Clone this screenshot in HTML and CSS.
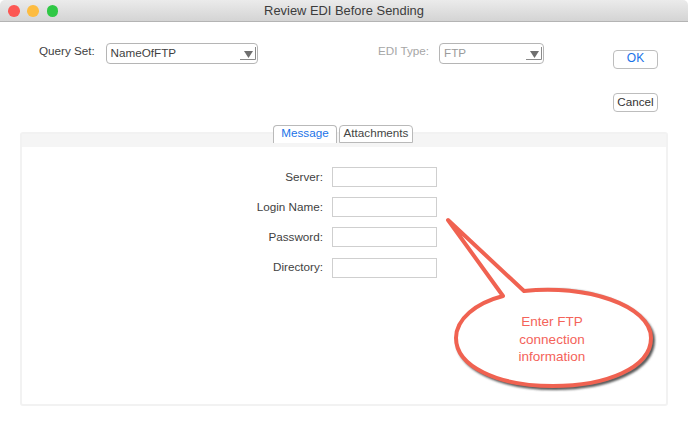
FILE: index.html
```html
<!DOCTYPE html>
<html lang="en">
<head>
<meta charset="utf-8">
<title>Review EDI Before Sending</title>
<link rel="stylesheet" href="styles.css">
</head>
<body>
<div class="window">
  <header class="titlebar">
    <div class="lights">
      <span class="light red"></span>
      <span class="light yellow"></span>
      <span class="light green"></span>
    </div>
    <div class="title">Review EDI Before Sending</div>
  </header>
  <section class="top">
    <div class="choice query">
      <span class="choice-label">Query Set:</span>
      <div class="select query-select">
        <span>NameOfFTP</span>
        <svg class="arrow" width="16" height="13" viewBox="0 0 16 13"><path d="M15.5 0V12.5H0" fill="none" stroke="#8a8a8a"/><path d="M4 4H13L8.5 11Z" fill="#6f6f6f"/></svg>
      </div>
    </div>
    <div class="choice edi">
      <span class="choice-label">EDI Type:</span>
      <div class="select edi-select">
        <span>FTP</span>
        <svg class="arrow" width="16" height="13" viewBox="0 0 16 13"><path d="M15.5 0V12.5H0" fill="none" stroke="#8a8a8a"/><path d="M4 4H13L8.5 11Z" fill="#6f6f6f"/></svg>
      </div>
    </div>
    <div class="actions">
      <button class="btn primary">OK</button>
      <button class="btn">Cancel</button>
    </div>
  </section>
  <section class="panel">
    <div class="panel-band">
      <div class="tabs">
        <div class="tab active">Message</div>
        <div class="tab">Attachments</div>
      </div>
    </div>
    <div class="form">
      <label class="form-label">Server:</label><div class="input"></div>
      <label class="form-label">Login Name:</label><div class="input"></div>
      <label class="form-label">Password:</label><div class="input"></div>
      <label class="form-label">Directory:</label><div class="input"></div>
    </div>
  </section>
  <div class="callout">
    <svg width="688" height="445" viewBox="0 0 688 445">
      <defs>
        <filter id="soft" x="-10%" y="-10%" width="120%" height="120%"><feGaussianBlur stdDeviation="0.8"/></filter>
      </defs>
      <path class="callout-shadow" d="M456 338C456 366 497 386 553 386C606 386 651 368 651 338C651 312 600 289 553 289C540 289 532 290 524 291" filter="url(#soft)"/>
      <path class="callout-shape" d="M448 220L524 291C585 284 651 305 651 338C651 368 606 386 553 386C497 386 456 366 456 338C456 319 476 303 503 296Z"/>
    </svg>
    <div class="callout-text">Enter FTP<br>connection<br>information</div>
  </div>
</div>
</body>
</html>
```
FILE: styles.css
```css
* { box-sizing: border-box; }
html, body { margin: 0; padding: 0; }
body { width: 688px; height: 445px; overflow: hidden; background: #fff; font-family: "Liberation Sans", Arial, sans-serif; color: #3f3f3f; }
.window { position: relative; width: 688px; height: 445px; background: #fff; }

.titlebar { position: relative; display: flex; align-items: center; justify-content: center; height: 22px; background: linear-gradient(#ebebeb, #d4d4d4); border-bottom: 1px solid #b4b4b4; border-radius: 5px 5px 0 0; }
.lights { position: absolute; left: 8px; top: 5px; display: flex; gap: 7.8px; }
.light { width: 11.6px; height: 11.6px; border-radius: 50%; }
.red { background: #fc5753; }
.yellow { background: #fdbc40; }
.green { background: #2fc845; }
.title { font-size: 12.9px; color: #3c3c3c; }

.top { display: flex; height: 102px; padding: 21px 30px 0 39px; }
.choice { display: flex; align-items: flex-start; font-size: 11.7px; }
.choice-label { width: 56px; padding-top: 1px; line-height: 14px; white-space: nowrap; }
.select { position: relative; height: 21px; margin-left: 10.5px; padding: 1px 4px; line-height: 15px; border: 1px solid #b5b5b5; border-radius: 4px; font-size: 11.7px; background: #fff; }
.query-select { width: 152px; }
.edi { margin-left: 120.5px; color: #a9a9a9; }
.edi .choice-label { width: 52px; color: #a6a6a6; }
.edi-select { width: 104.5px; margin-left: 9px; color: #9b9b9b; }
.arrow { position: absolute; right: 1px; top: 3px; }
.actions { display: flex; flex-direction: column; gap: 24px; margin-left: auto; padding-top: 7px; }
.btn { width: 45px; height: 19px; padding: 0 0 2px; font: 11.7px "Liberation Sans", Arial, sans-serif; line-height: 15px; color: #333; background: #fff; border: 1px solid #bdbdbd; border-radius: 4px; }
.primary { color: #1a73e8; font-size: 12px; }

.panel { height: 274px; margin: 8px 20px 0; border: 2px solid #f2f2f2; border-radius: 3px; background: #fff; }
.panel-band { height: 13px; background: #f5f5f5; }
.tabs { display: flex; gap: 2px; padding: 0 0 0 251px; transform: translateY(-9px); }
.tab { height: 18px; padding: 0 3.5px; font-size: 11.7px; line-height: 13px; color: #444; background: #fff; border: 1px solid #b9b9b9; border-radius: 4px 4px 0 0; }
.tab.active { width: 64px; text-align: center; color: #1a73e8; border-bottom: 0; }
.form { display: grid; grid-template-columns: 301px 105px; column-gap: 9px; row-gap: 10.2px; align-items: center; padding-top: 20px; }
.form-label { padding-bottom: 2px; font-size: 11.7px; text-align: right; color: #3f3f3f; }
.input { height: 20px; border: 1px solid #cfcfcf; background: #fff; }

.callout { position: absolute; left: 0; top: 0; width: 688px; height: 445px; pointer-events: none; }
.callout svg { display: block; }
.callout-shadow { fill: none; stroke: #555; stroke-width: 4; transform: translate(2px, 2px); }
.callout-shape { fill: #fff; stroke: #f06251; stroke-width: 4; stroke-linejoin: round; }
.callout-text { position: absolute; left: 502px; top: 313px; width: 100px; text-align: center; font-size: 13.5px; line-height: 17.5px; color: #f4635a; }
```
